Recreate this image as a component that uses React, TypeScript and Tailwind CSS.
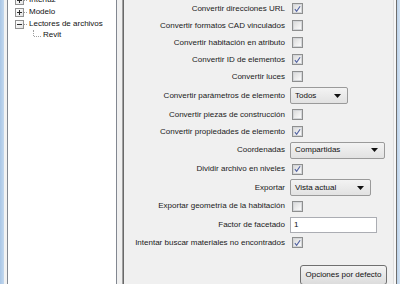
import React from "react";

const font = { fontFamily: '"Liberation Sans", Arial, sans-serif' };

function Check({ checked }: { checked?: boolean }) {
  return (
    <div className="ml-[2px] w-[11px] h-[11px] border border-[#8e8f8f] bg-white flex items-center justify-center">
      <div className="w-[9px] h-[9px] border border-[#d4d6d9] bg-gradient-to-br from-[#dcdcdc] to-[#fbfbfb] flex items-center justify-center">
        {checked && (
          <svg width="8" height="8" viewBox="0 0 8 8">
            <path d="M1 4.2 L3 6.6 L7 0.8" fill="none" stroke="#5263a3" strokeWidth="1.3" />
          </svg>
        )}
      </div>
    </div>
  );
}

function Select({ value, w }: { value: string; w: string }) {
  return (
    <div className={`${w} h-[17px] border border-[#9a9a9a] rounded-[2px] bg-gradient-to-b from-[#f3f3f3] to-[#e2e2e2] flex items-center pl-[4px] pr-[6px] justify-between`}>
      <span className="text-[8px] text-[#111]">{value}</span>
      <svg width="7" height="4" viewBox="0 0 7 4">
        <path d="M0 0 H7 L3.5 4 Z" fill="#111" />
      </svg>
    </div>
  );
}

type Row = { label: string; h: string; ctrl: React.ReactNode };

const rows: Row[] = [
  { label: "Convertir direcciones URL", h: "h-[17px]", ctrl: <Check checked /> },
  { label: "Convertir formatos CAD vinculados", h: "h-[17px]", ctrl: <Check /> },
  { label: "Convertir habitación en atributo", h: "h-[17px]", ctrl: <Check /> },
  { label: "Convertir ID de elementos", h: "h-[17px]", ctrl: <Check checked /> },
  { label: "Convertir luces", h: "h-[17px]", ctrl: <Check /> },
  { label: "Convertir parámetros de elemento", h: "h-[21px]", ctrl: <Select value="Todos" w="w-[58px]" /> },
  { label: "Convertir piezas de construcción", h: "h-[17px]", ctrl: <Check /> },
  { label: "Convertir propiedades de elemento", h: "h-[17px]", ctrl: <Check checked /> },
  { label: "Coordenadas", h: "h-[20px]", ctrl: <Select value="Compartidas" w="w-[95px]" /> },
  { label: "Dividir archivo en niveles", h: "h-[18px]", ctrl: <Check checked /> },
  { label: "Exportar", h: "h-[19px]", ctrl: <Select value="Vista actual" w="w-[81px]" /> },
  { label: "Exportar geometría de la habitación", h: "h-[18px]", ctrl: <Check /> },
  {
    label: "Factor de facetado",
    h: "h-[19px]",
    ctrl: (
      <div className="w-[87px] h-[16px] border border-[#abadb3] bg-white flex items-center pl-[3px] text-[8px] text-[#111]">
        1
      </div>
    ),
  },
  { label: "Intentar buscar materiales no encontrados", h: "h-[17px]", ctrl: <Check checked /> },
];

function Expander({ open }: { open?: boolean }) {
  return (
    <div className="w-[9px] h-[9px] border border-[#919191] bg-gradient-to-br from-white to-[#e4e4e4] relative flex items-center justify-center">
      <div className="absolute w-[5px] h-[1px] bg-[#2c2c2c]" />
      {!open && <div className="absolute w-[1px] h-[5px] bg-[#2c2c2c]" />}
    </div>
  );
}

function TreeItem({ label, open }: { label: string; open?: boolean }) {
  return (
    <div className="h-[12px] flex items-center">
      <div className="w-[7px]" />
      <Expander open={open} />
      <div className="w-[3px] h-0 border-t border-dotted border-[#a0a0a0]" />
      <span className="ml-[2px] text-[8px] text-[#111] leading-none">{label}</span>
    </div>
  );
}

export default function App() {
  return (
    <div className="w-[400px] h-[284px] overflow-hidden flex bg-[#f0f0f0]" style={font}>
      <div className="w-[4px] h-full bg-gradient-to-r from-[#a9c6e6] to-[#c3d8ee]" />
      <div className="w-[3px] h-full bg-[#f2f2f2]" />
      <div className="w-[110px] h-full bg-white border-x border-[#828790] overflow-hidden">
        <div className="mt-[-6px]">
          <TreeItem label="Interfaz" />
          <TreeItem label="Modelo" />
          <TreeItem label="Lectores de archivos" open />
          <div className="h-[12px] flex items-start">
            <div className="ml-[25px] w-[1px] h-[6px] border-l border-dotted border-[#a0a0a0]" />
            <div className="mt-[6px] w-[7px] h-0 border-t border-dotted border-[#a0a0a0]" />
            <span className="ml-[2px] mt-[1px] text-[8px] text-[#111] leading-none">Revit</span>
          </div>
        </div>
      </div>
      <div className="w-[5px] h-full bg-[#f0f0f0]" />
      <div className="w-[1px] h-full bg-[#a0a0a0]" />
      <div className="w-[1px] h-full bg-[#696969]" />
      <div className="w-[269px] h-full bg-[#f0f0f0] flex flex-col">
        {rows.map((r) => (
          <div key={r.label} className={`${r.h} flex items-center shrink-0`}>
            <div className="w-[161px] text-right text-[8px] text-[#1a1a1a] whitespace-nowrap leading-none">
              {r.label}
            </div>
            <div className="ml-[5px] flex items-center">{r.ctrl}</div>
          </div>
        ))}
        <div className="mt-[14px] flex">
          <div className="ml-[176px] w-[87px] h-[20px] border border-[#707070] rounded-[3px] bg-gradient-to-b from-[#f4f4f4] to-[#dcdcdc] flex items-center justify-center text-[8px] text-[#111]">
            Opciones por defecto
          </div>
        </div>
      </div>
      <div className="w-[1px] h-full bg-[#dedede]" />
      <div className="w-[2px] h-full bg-[#f7f7f7]" />
      <div className="w-[1px] h-full bg-[#6e6e6e]" />
      <div className="flex-1 h-full bg-gradient-to-r from-[#bcd3ea] to-[#d2e2f3]" />
    </div>
  );
}
